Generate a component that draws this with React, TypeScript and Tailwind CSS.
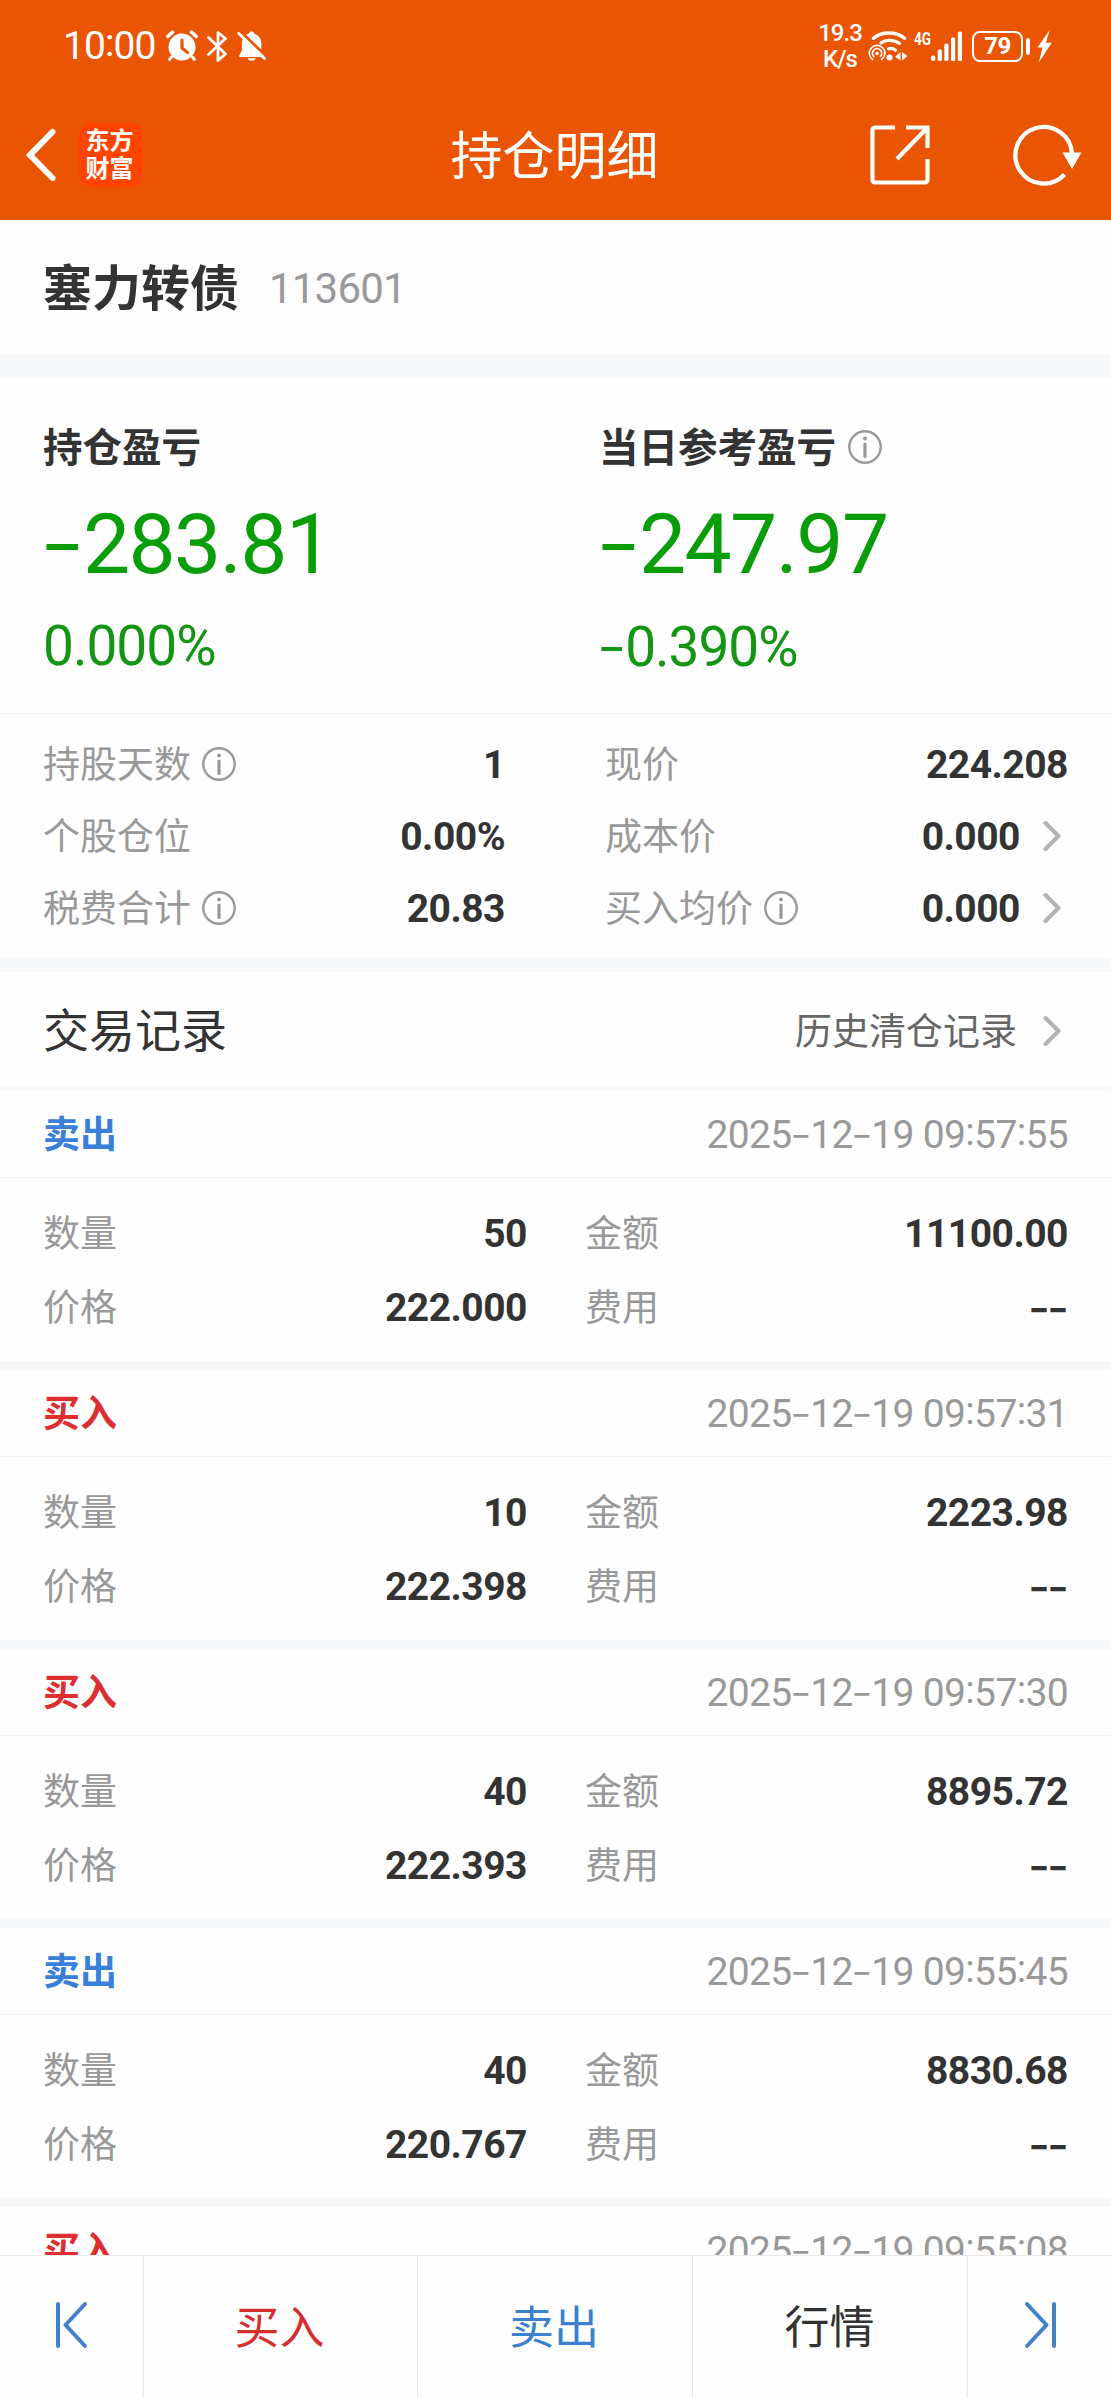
import { Fragment } from "react"
import clsx from "clsx"

type Stat = { label: string; value: string; info?: boolean; link?: boolean }
type Trade = { side: "buy" | "sell"; time: string; qty?: string; price?: string; amount?: string; fee?: string }

const leftStats: Stat[] = [
  { label: "持股天数", value: "1", info: true },
  { label: "个股仓位", value: "0.00%" },
  { label: "税费合计", value: "20.83", info: true },
]

const rightStats: Stat[] = [
  { label: "现价", value: "224.208" },
  { label: "成本价", value: "0.000", link: true },
  { label: "买入均价", value: "0.000", info: true, link: true },
]

const trades: Trade[] = [
  { side: "sell", time: "2025-12-19 09:57:55", qty: "50", price: "222.000", amount: "11100.00", fee: "--" },
  { side: "buy", time: "2025-12-19 09:57:31", qty: "10", price: "222.398", amount: "2223.98", fee: "--" },
  { side: "buy", time: "2025-12-19 09:57:30", qty: "40", price: "222.393", amount: "8895.72", fee: "--" },
  { side: "sell", time: "2025-12-19 09:55:45", qty: "40", price: "220.767", amount: "8830.68", fee: "--" },
  { side: "buy", time: "2025-12-19 09:55:08" },
]

// hyphens come from Inter, slightly stretched: Roboto's are too short next to tabular digits
function Num({ children, className }: { children: string; className?: string }) {
  return (
    <span className={clsx("whitespace-pre leading-none", className)}>
      {children.split(/([-:])/).map((part, i) => {
        if (part === "-") return <span key={i} className="inline-block scale-x-[1.18] scale-y-90 font-['Inter'] tracking-[0.015em]">-</span>
        if (part === ":") return <span key={i} className="relative -top-[0.06em]">:</span>
        return <Fragment key={i}>{part}</Fragment>
      })}
    </span>
  )
}

function InfoIcon() {
  return (
    <svg className="h-[34px] w-[34px] shrink-0" viewBox="0 0 34 34" fill="none" stroke="#999" strokeWidth="2.4">
      <circle cx="17" cy="17" r="15.7" />
      <path d="M17 14v12.5" strokeWidth="3.2" strokeLinecap="round" />
      <circle cx="17" cy="8.6" r="2" fill="#999" stroke="none" />
    </svg>
  )
}

function Chevron() {
  return (
    <svg className="h-8 w-[18px] shrink-0" viewBox="0 0 18 32" fill="none" stroke="#b3b3b3" strokeWidth="4" strokeLinecap="round" strokeLinejoin="round">
      <path d="M2.5 3 15.5 16 2.5 29" />
    </svg>
  )
}

function StatusBar() {
  return (
    <div className="flex h-[92px] items-center text-white">
      <Num className="ml-[63px] w-[103px] text-[39px] tracking-[-0.9px]">10:00</Num>
      <svg className="h-[32px] w-[32px]" viewBox="0 0 32 32" fill="none" stroke="#fff">
        <circle cx="16" cy="17" r="13.5" fill="#fff" stroke="none" />
        <path d="M1.8 6.5 6.5 2.2M25.5 2.2l4.7 4.3" strokeWidth="3.6" strokeLinecap="round" />
        <path d="M5.5 27 3.6 29.4M26.5 27l1.9 2.4" strokeWidth="3" strokeLinecap="round" />
        <path d="M16 10v8l5.5 4.5" stroke="#ea5504" strokeWidth="3.2" strokeLinecap="round" />
      </svg>
      <svg className="ml-[8px] h-[33px] w-[22px]" viewBox="0 0 22 33" fill="none" stroke="#fff" strokeWidth="2.8" strokeLinejoin="round" strokeLinecap="round">
        <path d="M2.5 7.5 19.5 24 12 30.5v-28L19.5 8.5 2.5 24.5" />
      </svg>
      <svg className="ml-[9px] h-[32px] w-[30px]" viewBox="0 0 30 32">
        <path d="M5 11.5C6.5 6 9.5 4.2 12.3 3.4C12.3 .4 17 .4 17 3.400C22 5 24.4 9 24.4 14v6l2.600 5.300v1.700H2.300v-1.700L4.800 21z" fill="#fff" />
        <path d="M10.500 28.300h8.300a4.300 3.400 0 0 1-8.300 0z" fill="#fff" />
        <path d="M3 1.200 29 26" stroke="#ea5504" strokeWidth="3" />
        <path d="M1.800 3.500 27.500 28.500" stroke="#fff" strokeWidth="2.8" strokeLinecap="round" />
      </svg>
      <div className="ml-auto flex w-[46px] flex-col items-center gap-[2px] text-[24px] font-medium tracking-[-1px]">
        <span className="leading-6">19.3</span>
        <span className="leading-6">K/s</span>
      </div>
      <svg className="ml-[5px] h-[32px] w-[40px]" viewBox="0 0 40 32" fill="none" stroke="#fff" strokeLinecap="round">
        <path d="M5.5 8.2C13 1.2 29 1.2 36.5 8.2" strokeWidth="3.6" />
        <path d="M13 12.8C18 9.3 26 9.5 31.5 13.5" strokeWidth="3.4" />
        <path d="M20.5 18.8C23 18 25.5 18.5 27.5 20.2" strokeWidth="3.2" />
        <path d="M4.5 29.5A7.8 7.8 0 1 1 13.7 29.5M5.8 26.5A4.6 4.6 0 1 1 12.4 26.5" strokeWidth="1.7" />
        <circle cx="9.1" cy="23.5" r="1.8" fill="#fff" stroke="none" />
        <circle cx="21.5" cy="27.5" r="3" fill="#fff" stroke="none" />
        <path d="M32.5 22v8.5L27 26.7zM34 22v8.5l5.500-4.500z" fill="#fff" stroke="none" />
      </svg>
      <svg className="ml-[6px] h-[32px] w-[49px]" viewBox="0 0 49 32" fill="#fff">
        <text x="0" y="14.5" fontSize="17.5" fontWeight="700" textLength="17" lengthAdjust="spacingAndGlyphs">4G</text>
        <rect x="17" y="25.5" width="4.4" height="5.5" rx="2" />
        <rect x="23.7" y="19.5" width="4.2" height="11.5" rx="1.5" />
        <rect x="30.3" y="13.5" width="4.2" height="17.5" rx="1.5" />
        <rect x="37" y="7.5" width="4.2" height="23.5" rx="1.5" />
        <rect x="43.8" y="1.5" width="4.2" height="29.5" rx="1.5" />
      </svg>
      <div className="ml-[9px] flex h-[31px] w-[51px] items-center justify-center rounded-lg border-[2.5px] border-white text-[24px] leading-none font-bold tracking-[-0.5px]">79</div>
      <div className="ml-[3px] h-[17px] w-[4px] rounded-full bg-white" />
      <svg className="mr-[59px] ml-[7px] h-[34px] w-[15px]" viewBox="0 0 15 34" fill="#fff">
        <path d="M13 .5.5 18.500h5L1.800 33.500 14.800 13.800H8.800z" />
      </svg>
    </div>
  )
}

function TitleBar() {
  return (
    <div className="relative flex h-[128px] items-center pb-[2px]">
      <svg className="ml-[24px] h-[56px] w-[34px]" viewBox="0 0 34 56" fill="none" stroke="#fff" strokeWidth="6" strokeLinecap="round" strokeLinejoin="miter">
        <path d="M28.5 5 6 28l22.5 23" />
      </svg>
      <div className="ml-[21px] flex h-16 w-16 flex-col items-center justify-center rounded-xl bg-[#ff4400] pr-[3px] text-[24px] font-bold text-white">
        <span className="leading-[28px]">东方</span>
        <span className="leading-[28px]">财富</span>
      </div>
      <h1 className="absolute inset-x-0 pt-[6px] pr-[2px] text-center text-[52px] leading-[64px] text-white">持仓明细</h1>
      <svg className="ml-auto h-[60px] w-[60px]" viewBox="0 0 60 60" fill="none" stroke="#fff" strokeWidth="4.2">
        <path d="M25 2.500H5a2.500 2.500 0 0 0-2.500 2.500v50A2.500 2.500 0 0 0 5 57.500h50a2.500 2.500 0 0 0 2.500-2.500V34" />
        <path d="M36 2.500h21.500V23M57 3 27 34" />
      </svg>
      <svg className="mr-[28px] ml-[81px] h-[62px] w-[72px]" viewBox="0 0 72 62" fill="none">
        <path d="M61 30A28.300 28.300 0 1 0 53.500 50.500" stroke="#fff" strokeWidth="4.3" />
        <path d="M51.500 28.500h19L61 45z" fill="#fff" />
      </svg>
    </div>
  )
}

function Profit({ title, value, percent, info }: { title: string; value: string; percent: string; info?: boolean }) {
  return (
    <div className="flex flex-col">
      <div className="flex h-10 items-center gap-[12px]">
        <span className="pt-[4px] text-[39.5px] leading-none font-bold text-[#333]">{title}</span>
        {info && <InfoIcon />}
      </div>
      <Num className="mt-[34px] text-[84px] tracking-[-1.6px] text-[#0a9d0a]">{value}</Num>
      <Num className="mt-[32px] text-[55px] tracking-[-1px] text-[#149614]">{percent}</Num>
    </div>
  )
}

function StatRow({ label, value, info, link }: Stat) {
  return (
    <div className="flex h-[72px] items-center">
      <span className="pt-[2px] text-[37px] leading-none text-[#999]">{label}</span>
      {info && <span className="ml-[11px]"><InfoIcon /></span>}
      <Num className="ml-auto pt-[2px] text-[39px] font-bold tracking-[-0.5px] text-[#333]">{value}</Num>
      {link && <span className="mr-[7px] ml-[23px]"><Chevron /></span>}
    </div>
  )
}

function Cell({ label, value = "" }: { label: string; value?: string }) {
  return (
    <div className="flex h-[74px] items-center justify-between">
      <span className="pt-[2px] text-[37px] leading-none text-[#999]">{label}</span>
      <Num className="pt-[2px] text-[39px] font-bold tracking-[-0.5px] text-[#333]">{value}</Num>
    </div>
  )
}

function TradeCard({ trade }: { trade: Trade }) {
  return (
    <div className="h-[279px] shrink-0 border-b-[9px] border-[#f6f8fa]">
      <div className="flex h-[87px] items-center justify-between border-b border-[#f3f4f6] pr-[43px] pl-[43px]">
        <span className={clsx("pt-[3px] text-[37px] leading-none font-bold", trade.side === "buy" ? "text-[#dd2f2f]" : "text-[#3a80d8]")}>
          {trade.side === "buy" ? "买入" : "卖出"}
        </span>
        <Num className="text-[39px] tracking-[-0.65px] text-[#999]">{trade.time}</Num>
      </div>
      {trade.qty && (
        <div className="flex pt-[18px] pr-[43px] pl-[43px]">
          <div className="w-[484px]">
            <Cell label="数量" value={trade.qty} />
            <Cell label="价格" value={trade.price} />
          </div>
          <div className="ml-[58px] flex-1">
            <Cell label="金额" value={trade.amount} />
            <Cell label="费用" value={trade.fee} />
          </div>
        </div>
      )}
    </div>
  )
}

export default function App() {
  return (
    <div className="flex h-[2398px] w-[1111px] flex-col overflow-hidden bg-[#fefefe] font-['Roboto','Noto_Sans_CJK_SC',sans-serif]">
      <header className="h-[220px] shrink-0 bg-[#ea5504]">
        <StatusBar />
        <TitleBar />
      </header>

      <div className="flex h-[134px] shrink-0 items-center pl-[43px]">
        <span className="pt-[4px] text-[49px] leading-none font-bold text-[#333]">塞力转债</span>
        <Num className="ml-[30px] pt-[3px] text-[42px] tracking-[-0.8px] text-[#999]">113601</Num>
      </div>

      <div className="h-[23px] shrink-0 bg-[#f6f8fa]" />

      <div className="grid h-[337px] shrink-0 grid-cols-[556px_1fr] border-b border-[#f3f4f6] pt-[50px] pl-[43px]">
        <Profit title="持仓盈亏" value="-283.81" percent="0.000%" />
        <Profit title="当日参考盈亏" value="-247.97" percent="-0.390%" info />
      </div>

      <div className="flex h-[244px] shrink-0 pt-[14px] pr-[43px] pl-[43px]">
        <div className="w-[462px]">
          {leftStats.map((s) => <StatRow key={s.label} {...s} />)}
        </div>
        <div className="ml-[100px] flex-1">
          {rightStats.map((s) => <StatRow key={s.label} {...s} />)}
        </div>
      </div>

      <div className="h-[14px] shrink-0 bg-[#f6f8fa]" />

      <div className="flex h-[119px] shrink-0 items-center border-b-4 border-[#f6f9fb] pr-[50px] pl-[43px]">
        <span className="pt-[2px] text-[46px] leading-none text-[#333]">交易记录</span>
        <span className="ml-auto pt-[6px] text-[37px] leading-none text-[#666]">历史清仓记录</span>
        <span className="ml-[26px] pt-[3px]"><Chevron /></span>
      </div>

      <div className="flex min-h-0 flex-1 flex-col overflow-hidden">
        {trades.map((t) => <TradeCard key={t.time} trade={t} />)}
      </div>

      <nav className="flex h-[143px] shrink-0 border-t border-[#e9e9e9] bg-[#fefefe] text-[45px]">
        <button className="flex w-[144px] items-center border-r border-[#e9e9e9] pb-[4px] pl-[55px]">
          <svg className="h-[48px] w-[34px]" viewBox="0 0 34 48" fill="none" stroke="#4380cb" strokeWidth="4" strokeLinecap="round" strokeLinejoin="round">
            <path d="M3 3v42M30 3 10.5 24 30 45" />
          </svg>
        </button>
        <button className="w-[274px] border-r border-[#e9e9e9] pt-[4px] pr-[2px] text-[#d32f2f]">买入</button>
        <button className="w-[275px] border-r border-[#e9e9e9] pt-[4px] pr-[2px] text-[#3a7fd0]">卖出</button>
        <button className="w-[275px] border-r border-[#e9e9e9] pt-[4px] pr-[1px] text-[#333]">行情</button>
        <button className="flex flex-1 items-center pb-[4px] pl-[55px]">
          <svg className="h-[48px] w-[34px]" viewBox="0 0 34 48" fill="none" stroke="#4380cb" strokeWidth="4" strokeLinecap="round" strokeLinejoin="round">
            <path d="M31 3v42M4 3 23.5 24 4 45" />
          </svg>
        </button>
      </nav>
    </div>
  )
}
